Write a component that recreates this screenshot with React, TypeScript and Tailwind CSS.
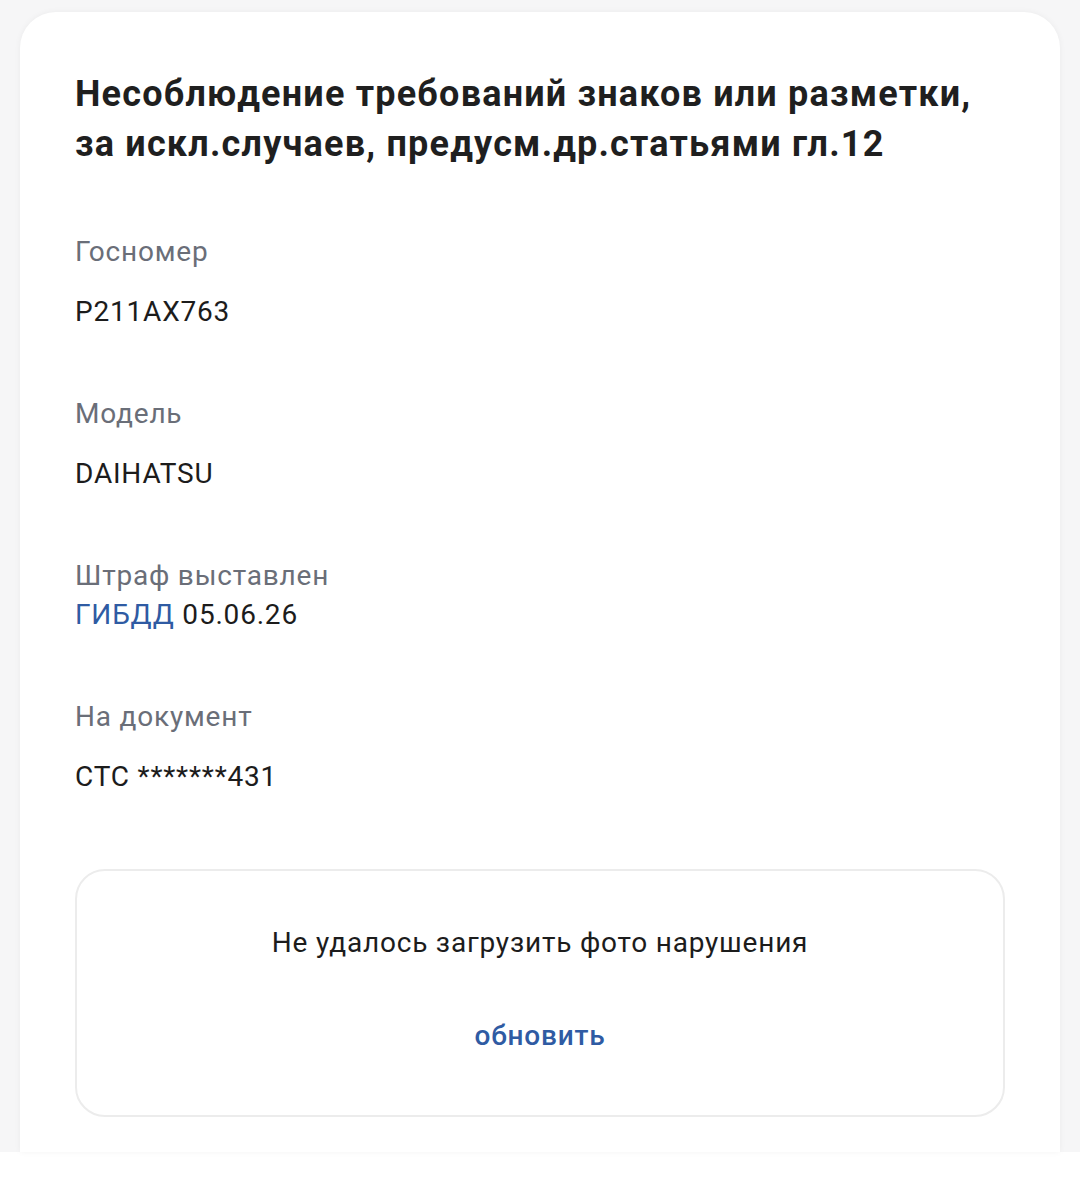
import React from 'react';

type Field = {
  label: string;
  value: React.ReactNode;
  tight?: boolean;
};

const fields: Field[] = [
  { label: 'Госномер', value: 'Р211АХ763' },
  { label: 'Модель', value: 'DAIHATSU' },
  {
    label: 'Штраф выставлен',
    value: (
      <>
        <span className="text-[#2f5ba3]">ГИБДД</span> 05.06.26
      </>
    ),
    tight: true,
  },
  { label: 'На документ', value: 'СТС *******431' },
];

export default function App() {
  return (
    <div className="w-[1080px] h-[1182px] bg-white font-['Roboto',sans-serif]">
      <div className="h-[1152px] bg-[#f6f6f7] px-[20px] pt-[12px]">
        <div className="h-full bg-white rounded-t-[36px] shadow-[0_0_6px_rgba(0,0,0,0.05)] px-[55px] pt-[57px]">
          {/* Title */}
          <h1 className="text-[36px] leading-[50px] font-bold text-[#1f1f1f] tracking-[1.2px]">
            Несоблюдение требований знаков или разметки, за искл.случаев, предусм.др.статьями гл.12
          </h1>

          {/* Fields */}
          <div className="flex flex-col gap-[63px] mt-[63px] tracking-[0.8px]">
            {fields.map((f) => (
              <div key={f.label} className="flex flex-col">
                <div className="text-[28px] leading-[39px] text-[#6a6e78]">{f.label}</div>
                <div className={`text-[28px] leading-[39px] text-[#1c1c1c] ${f.tight ? '' : 'mt-[21px]'}`}>
                  {f.value}
                </div>
              </div>
            ))}
          </div>

          {/* Photo error box */}
          <div className="mt-[73px] h-[248px] border-2 border-[#ececec] rounded-[30px] flex flex-col items-center tracking-[0.8px]">
            <div className="mt-[52px] text-[28px] leading-[40px] text-[#1c1c1c]">
              Не удалось загрузить фото нарушения
            </div>
            <button className="mt-[53px] text-[28px] leading-[40px] font-medium text-[#2f5ba3]">
              обновить
            </button>
          </div>
        </div>
      </div>
    </div>
  );
}
